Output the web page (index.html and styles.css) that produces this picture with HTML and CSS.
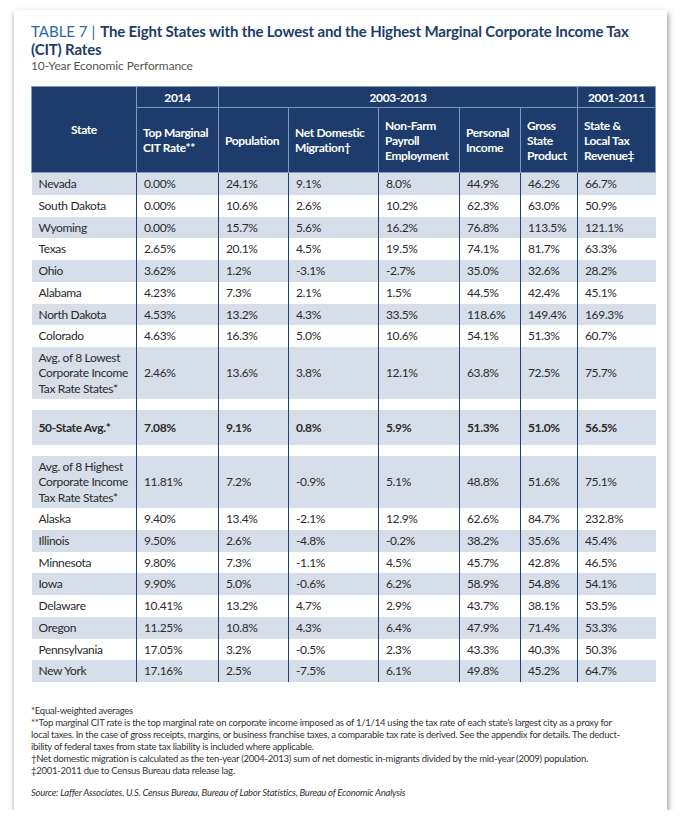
FILE: index.html
```html
<!DOCTYPE html>
<html lang="en">
<head>
<meta charset="utf-8">
<title>Table 7</title>
<link rel="stylesheet" href="styles.css">
</head>
<body>
<div class="card">
  <h1 class="title"><span class="label">TABLE 7 |</span><span class="name">The Eight States with the Lowest and the Highest Marginal Corporate Income Tax (CIT) Rates</span></h1>
  <p class="subtitle">10-Year Economic Performance</p>
  <table class="data">
    <colgroup>
      <col class="c-state"><col class="c-rate"><col class="c-pop"><col class="c-mig"><col class="c-emp"><col class="c-inc"><col class="c-gsp"><col class="c-rev">
    </colgroup>
    <thead>
      <tr class="h1">
        <th rowspan="2" class="center">State</th>
        <th class="center">2014</th>
        <th colspan="5" class="center">2003-2013</th>
        <th class="center">2001-2011</th>
      </tr>
      <tr class="h2">
        <th>Top Marginal CIT Rate**</th>
        <th>Population</th>
        <th>Net Domestic Migration†</th>
        <th>Non-Farm Payroll Employment</th>
        <th>Personal Income</th>
        <th>Gross State Product</th>
        <th class="narrow">State &amp; Local Tax Revenue‡</th>
      </tr>
    </thead>
    <tbody>
      <tr class="alt"><td>Nevada</td><td>0.00%</td><td>24.1%</td><td>9.1%</td><td>8.0%</td><td>44.9%</td><td>46.2%</td><td>66.7%</td></tr>
      <tr><td>South Dakota</td><td>0.00%</td><td>10.6%</td><td>2.6%</td><td>10.2%</td><td>62.3%</td><td>63.0%</td><td>50.9%</td></tr>
      <tr class="alt"><td>Wyoming</td><td>0.00%</td><td>15.7%</td><td>5.6%</td><td>16.2%</td><td>76.8%</td><td>113.5%</td><td>121.1%</td></tr>
      <tr><td>Texas</td><td>2.65%</td><td>20.1%</td><td>4.5%</td><td>19.5%</td><td>74.1%</td><td>81.7%</td><td>63.3%</td></tr>
      <tr class="alt"><td>Ohio</td><td>3.62%</td><td>1.2%</td><td>-3.1%</td><td>-2.7%</td><td>35.0%</td><td>32.6%</td><td>28.2%</td></tr>
      <tr><td>Alabama</td><td>4.23%</td><td>7.3%</td><td>2.1%</td><td>1.5%</td><td>44.5%</td><td>42.4%</td><td>45.1%</td></tr>
      <tr class="alt"><td>North Dakota</td><td>4.53%</td><td>13.2%</td><td>4.3%</td><td>33.5%</td><td>118.6%</td><td>149.4%</td><td>169.3%</td></tr>
      <tr><td>Colorado</td><td>4.63%</td><td>16.3%</td><td>5.0%</td><td>10.6%</td><td>54.1%</td><td>51.3%</td><td>60.7%</td></tr>
      <tr class="alt avg"><td>Avg. of 8 Lowest Corporate Income Tax Rate States*</td><td>2.46%</td><td>13.6%</td><td>3.8%</td><td>12.1%</td><td>63.8%</td><td>72.5%</td><td>75.7%</td></tr>
      <tr class="gap"><td></td><td></td><td></td><td></td><td></td><td></td><td></td><td></td></tr>
      <tr class="alt total"><td>50-State Avg.*</td><td>7.08%</td><td>9.1%</td><td>0.8%</td><td>5.9%</td><td>51.3%</td><td>51.0%</td><td>56.5%</td></tr>
      <tr class="gap"><td></td><td></td><td></td><td></td><td></td><td></td><td></td><td></td></tr>
      <tr class="alt avg"><td>Avg. of 8 Highest Corporate Income Tax Rate States*</td><td>11.81%</td><td>7.2%</td><td>-0.9%</td><td>5.1%</td><td>48.8%</td><td>51.6%</td><td>75.1%</td></tr>
      <tr><td>Alaska</td><td>9.40%</td><td>13.4%</td><td>-2.1%</td><td>12.9%</td><td>62.6%</td><td>84.7%</td><td>232.8%</td></tr>
      <tr class="alt"><td>Illinois</td><td>9.50%</td><td>2.6%</td><td>-4.8%</td><td>-0.2%</td><td>38.2%</td><td>35.6%</td><td>45.4%</td></tr>
      <tr><td>Minnesota</td><td>9.80%</td><td>7.3%</td><td>-1.1%</td><td>4.5%</td><td>45.7%</td><td>42.8%</td><td>46.5%</td></tr>
      <tr class="alt"><td>Iowa</td><td>9.90%</td><td>5.0%</td><td>-0.6%</td><td>6.2%</td><td>58.9%</td><td>54.8%</td><td>54.1%</td></tr>
      <tr><td>Delaware</td><td>10.41%</td><td>13.2%</td><td>4.7%</td><td>2.9%</td><td>43.7%</td><td>38.1%</td><td>53.5%</td></tr>
      <tr class="alt"><td>Oregon</td><td>11.25%</td><td>10.8%</td><td>4.3%</td><td>6.4%</td><td>47.9%</td><td>71.4%</td><td>53.3%</td></tr>
      <tr><td>Pennsylvania</td><td>17.05%</td><td>3.2%</td><td>-0.5%</td><td>2.3%</td><td>43.3%</td><td>40.3%</td><td>50.3%</td></tr>
      <tr class="alt"><td>New York</td><td>17.16%</td><td>2.5%</td><td>-7.5%</td><td>6.1%</td><td>49.8%</td><td>45.2%</td><td>64.7%</td></tr>
    </tbody>
  </table>
  <div class="notes">
    <p>*Equal-weighted averages</p>
    <p>**Top marginal CIT rate is the top marginal rate on corporate income imposed as of 1/1/14 using the tax rate of each state’s largest city as a proxy for<br>local taxes. In the case of gross receipts, margins, or business franchise taxes, a comparable tax rate is derived. See the appendix for details. The deduct-<br>ibility of federal taxes from state tax liability is included where applicable.</p>
    <p>†Net domestic migration is calculated as the ten-year (2004-2013) sum of net domestic in-migrants divided by the mid-year (2009) population.</p>
    <p>‡2001-2011 due to Census Bureau data release lag.</p>
    <p class="source">Source: Laffer Associates, U.S. Census Bureau, Bureau of Labor Statistics, Bureau of Economic Analysis</p>
  </div>
</div>
</body>
</html>
```

FILE: styles.css
```css
html, body {
  margin: 0;
  padding: 0;
  background: #ffffff;
}

body {
  font-family: Lato, "Noto Sans", sans-serif;
  color: #2b2b2b;
}

.card {
  width: 653px;
  height: 800px;
  margin: 10px 0 0 14px;
  box-sizing: border-box;
  padding: 12px 0 0 17px;
  background: #fff;
  box-shadow: 1px 3px 6px rgba(0, 0, 0, 0.45);
}

.title {
  margin: 0;
  width: 620px;
  font-size: 15px;
  line-height: 18px;
  font-weight: 700;
  color: #1c3d6c;
}

.title .label {
  font-weight: 400;
  color: #2c66a6;
  margin-right: 5px;
}

.title .name {
  letter-spacing: -0.15px;
}

.subtitle {
  margin: 0;
  font-size: 12px;
  line-height: 15px;
  letter-spacing: -0.1px;
  color: #555;
}

.data {
  margin-top: 13px;
  width: 624px;
  table-layout: fixed;
  border-collapse: collapse;
  font-size: 12px;
  letter-spacing: -0.35px;
}

.c-state { width: 105px; }
.c-rate { width: 82px; }
.c-pop { width: 70px; }
.c-mig { width: 90px; }
.c-emp { width: 81px; }
.c-inc { width: 61px; }
.c-gsp { width: 57px; }
.c-rev { width: 78px; }

.data th {
  background: #1d3c6b;
  color: #fff;
  font-weight: 700;
  text-align: left;
  padding: 0 4px 0 6px;
  border: 1px solid #7d9ac4;
  line-height: 15px;
  vertical-align: middle;
}

.data th.narrow {
  padding-right: 14px;
}

.data th.center {
  text-align: center;
  padding: 0 4px;
}

.data .h1 th {
  height: 20px;
}

.data .h2 th {
  height: 64px;
}

.data td {
  padding: 0 3px 0 7px;
  height: 21.75px;
  line-height: 15.5px;
  vertical-align: middle;
  border-left: 1px solid #24416e;
}

.data td:first-child {
  border-left: none;
}

.data tr.alt td {
  background: #d6dee9;
}

.data tr.avg td {
  height: 52px;
}

.data tr.total td {
  height: 35px;
  font-weight: 700;
}

.data tr.gap td {
  height: 11px;
  padding: 0;
  background: #fff;
}

.notes {
  margin-top: 23px;
  font-size: 9.5px;
  line-height: 12px;
  letter-spacing: -0.25px;
  color: #333;
  white-space: nowrap;
}

.notes p {
  margin: 0;
}

.notes .source {
  margin-top: 10px;
  font-style: italic;
}
```
